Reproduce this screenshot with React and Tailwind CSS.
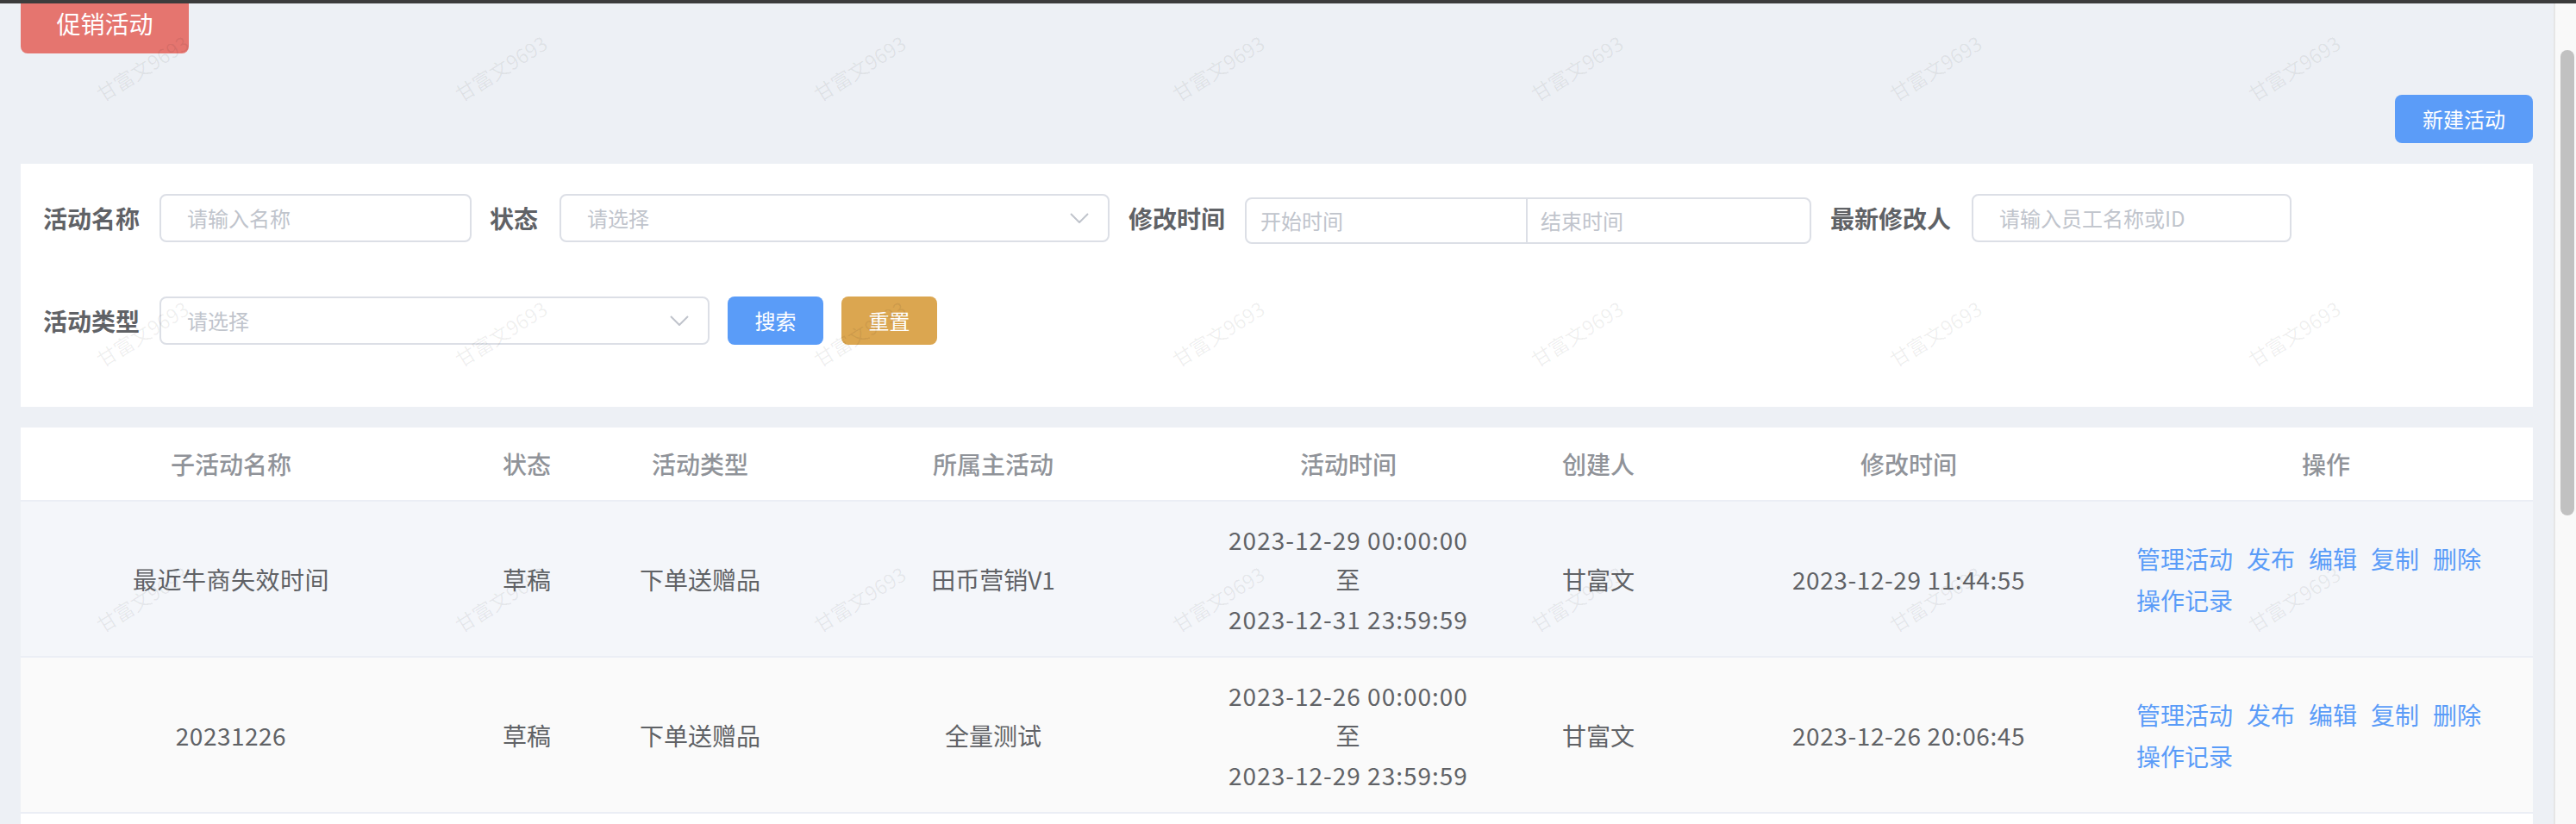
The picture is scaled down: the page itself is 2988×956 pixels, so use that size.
import React from "react";

const GRID =
  "grid grid-cols-[488px_198px_204px_476px_348px_232px_488px_480px]";

const headers = [
  "子活动名称",
  "状态",
  "活动类型",
  "所属主活动",
  "活动时间",
  "创建人",
  "修改时间",
  "操作",
];

const rows = [
  {
    name: "最近牛商失效时间",
    status: "草稿",
    type: "下单送赠品",
    main: "田币营销V1",
    start: "2023-12-29 00:00:00",
    end: "2023-12-31 23:59:59",
    creator: "甘富文",
    modified: "2023-12-29 11:44:55",
    bg: "bg-[#f4f6fa]",
  },
  {
    name: "20231226",
    status: "草稿",
    type: "下单送赠品",
    main: "全量测试",
    start: "2023-12-26 00:00:00",
    end: "2023-12-29 23:59:59",
    creator: "甘富文",
    modified: "2023-12-26 20:06:45",
    bg: "bg-[#fafafa]",
  },
];

function Chevron() {
  return (
    <svg width="22" height="12" viewBox="0 0 22 12" fill="none">
      <polyline
        points="1,1 11,11 21,1"
        stroke="#c0c4cc"
        strokeWidth="2"
        strokeLinejoin="round"
      />
    </svg>
  );
}

function Label({ children }) {
  return (
    <span className="text-[28px] leading-[40px] font-bold text-[#606266] whitespace-nowrap">
      {children}
    </span>
  );
}

function Input({ placeholder, w }) {
  return (
    <div
      className={`${w} h-[56px] border-2 border-[#dcdfe6] rounded-[8px] bg-white flex items-center pl-[30px] text-[24px] text-[#c0c4cc]`}
    >
      {placeholder}
    </div>
  );
}

function Select({ w }) {
  return (
    <div
      className={`${w} h-[56px] border-2 border-[#dcdfe6] rounded-[8px] bg-white flex items-center justify-between pl-[30px] pr-[22px] text-[24px] text-[#c0c4cc]`}
    >
      <span>请选择</span>
      <Chevron />
    </div>
  );
}

function Watermarks() {
  const items = [];
  for (let r = 0; r < 3; r++) {
    for (let c = 0; c < 7; c++) {
      items.push(
        <span
          key={`${r}-${c}`}
          className="absolute whitespace-nowrap text-[23px] text-[rgba(0,0,0,0.065)] -translate-x-1/2 -translate-y-1/2 -rotate-[32deg]"
          style={{ left: 165 + 416 * c, top: 79 + 308 * r }}
        >
          甘富文9693
        </span>
      );
    }
  }
  return (
    <div className="pointer-events-none absolute inset-0 overflow-hidden">
      {items}
    </div>
  );
}

export default function App() {
  return (
    <div className="relative w-[2988px] h-[956px] overflow-hidden bg-[#edf0f5] flex flex-col font-['Noto_Sans_CJK_SC','Noto_Sans',sans-serif]">
      <div className="h-[4px] bg-[#3c3c3c] shrink-0" />
      <div className="flex flex-1 min-h-0">
        <main className="w-[2962px] px-[24px] flex flex-col">
          <div className="w-[195px] h-[58px] bg-[#e5756f] rounded-b-[8px] text-white text-[28px] leading-[46px] text-center">
            促销活动
          </div>

          <div className="flex justify-end mt-[48px]">
            <button className="w-[160px] h-[56px] rounded-[8px] bg-[#5b9cf8] text-white text-[24px]">
              新建活动
            </button>
          </div>

          <section className="mt-[24px] h-[282px] bg-white pl-[26px] pt-[33px]">
            <div className="flex items-center">
              <Label>活动名称</Label>
              <div className="ml-[23px]">
                <Input placeholder="请输入名称" w="w-[362px]" />
              </div>
              <div className="ml-[21px]">
                <Label>状态</Label>
              </div>
              <div className="ml-[25px]">
                <Select w="w-[638px]" />
              </div>
              <div className="ml-[22px]">
                <Label>修改时间</Label>
              </div>
              <div className="ml-[23px] mt-[6px] w-[657px] h-[54px] border-2 border-[#dcdfe6] rounded-[8px] flex text-[24px] text-[#c0c4cc]">
                <div className="w-[326px] border-r-2 border-[#dcdfe6] flex items-center pl-[16px]">
                  开始时间
                </div>
                <div className="flex-1 flex items-center pl-[15px]">结束时间</div>
              </div>
              <div className="ml-[22px]">
                <Label>最新修改人</Label>
              </div>
              <div className="ml-[24px]">
                <Input placeholder="请输入员工名称或ID" w="w-[371px]" />
              </div>
            </div>

            <div className="flex items-center mt-[61px]">
              <Label>活动类型</Label>
              <div className="ml-[23px]">
                <Select w="w-[638px]" />
              </div>
              <button className="ml-[21px] w-[111px] h-[56px] rounded-[8px] bg-[#5a9cf8] text-white text-[24px]">
                搜索
              </button>
              <button className="ml-[21px] w-[111px] h-[56px] rounded-[8px] bg-[#dba650] text-white text-[24px]">
                重置
              </button>
            </div>
          </section>

          <section className="mt-[24px] bg-white flex-1">
            <div className={`${GRID} h-[86px] border-b-2 border-[#ebeef5]`}>
              {headers.map((h) => (
                <div
                  key={h}
                  className="flex items-center justify-center text-[28px] font-medium text-[#909399]"
                >
                  {h}
                </div>
              ))}
            </div>
            {rows.map((r, i) => (
              <div
                key={i}
                className={`${GRID} h-[181px] border-b-2 border-[#ebeef5] ${r.bg} text-[28px] text-[#606266]`}
              >
                <div className="flex items-center justify-center tracking-[0.5px]">{r.name}</div>
                <div className="flex items-center justify-center">{r.status}</div>
                <div className="flex items-center justify-center">{r.type}</div>
                <div className="flex items-center justify-center">{r.main}</div>
                <div className="flex flex-col items-center justify-center leading-[46px] tracking-[1px]">
                  <span>{r.start}</span>
                  <span>至</span>
                  <span>{r.end}</span>
                </div>
                <div className="flex items-center justify-center">{r.creator}</div>
                <div className="flex items-center justify-center tracking-[0.6px]">{r.modified}</div>
                <div className="flex items-center pl-[20px] pr-[20px]">
                  <div className="flex flex-wrap gap-x-[16px] leading-[48px] text-[#5a9cf8]">
                    <span>管理活动</span>
                    <span>发布</span>
                    <span>编辑</span>
                    <span>复制</span>
                    <span>删除</span>
                    <span>操作记录</span>
                  </div>
                </div>
              </div>
            ))}
          </section>
        </main>

        <aside className="w-[26px] border-l-2 border-[#e6e6e6] bg-[#f9f9f9] shrink-0">
          <div className="ml-[6px] mt-[54px] w-[16px] h-[540px] rounded-full bg-[#c1c1c1]" />
        </aside>
      </div>
      <Watermarks />
    </div>
  );
}
